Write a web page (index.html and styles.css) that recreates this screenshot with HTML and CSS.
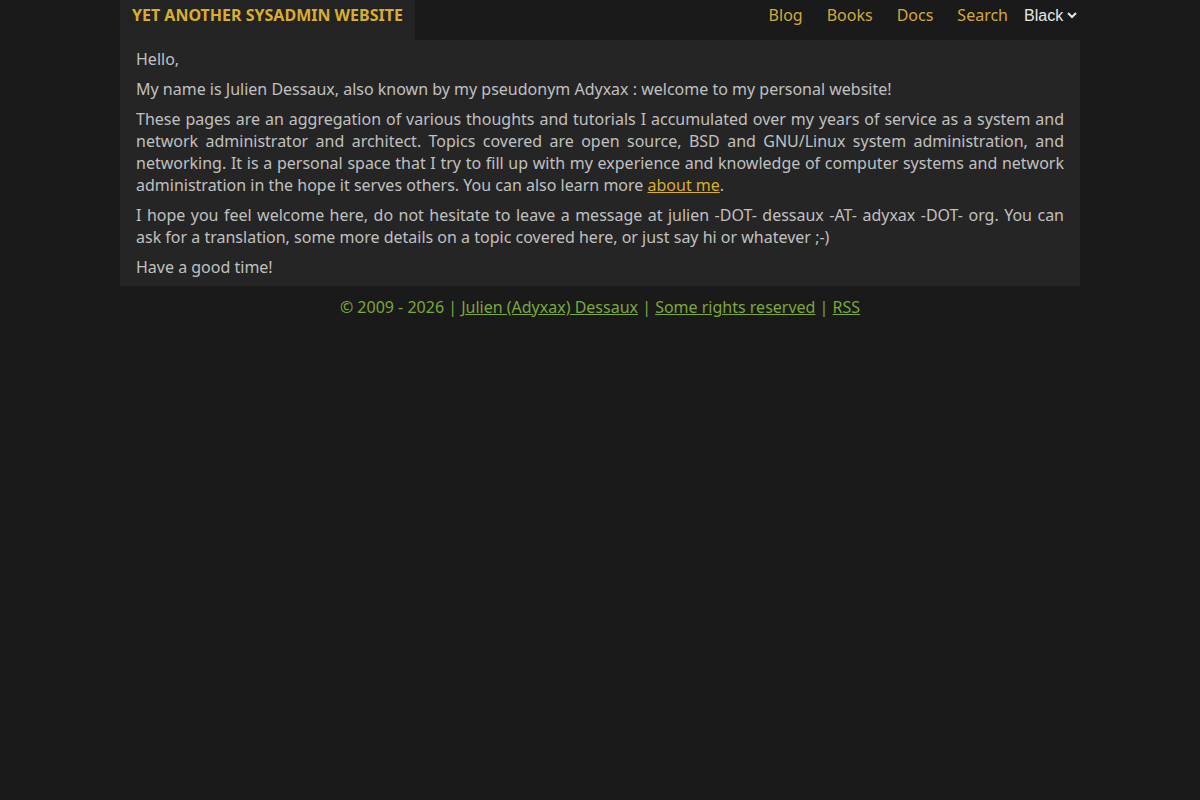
FILE: index.html
```html
<!DOCTYPE html>
<html lang="en">
<head>
<meta charset="utf-8">
<title>Yet Another Sysadmin Website</title>
<link rel="stylesheet" href="styles.css">
</head>
<body>
<div class="wrap">
  <header class="topbar">
    <a class="brand" href="#">YET ANOTHER SYSADMIN WEBSITE</a>
    <nav class="menu">
      <a href="#">Blog</a>
      <a href="#">Books</a>
      <a href="#">Docs</a>
      <a href="#">Search</a>
      <select class="theme">
        <option>Black</option>
      </select>
    </nav>
  </header>
  <main class="content">
    <p>Hello,</p>
    <p>My name is Julien Dessaux, also known by my pseudonym Adyxax : welcome to my personal website!</p>
    <p>These pages are an aggregation of various thoughts and tutorials I accumulated over my years of service as a system and network administrator and architect. Topics covered are open source, BSD and GNU/Linux system administration, and networking. It is a personal space that I try to fill up with my experience and knowledge of computer systems and network administration in the hope it serves others. You can also learn more <a href="#">about me</a>.</p>
    <p>I hope you feel welcome here, do not hesitate to leave a message at julien -DOT- dessaux -AT- adyxax -DOT- org. You can ask for a translation, some more details on a topic covered here, or just say hi or whatever ;-)</p>
    <p>Have a good time!</p>
  </main>
  <footer class="foot">
    © 2009 - 2026 | <a href="#">Julien (Adyxax) Dessaux</a> | <a href="#">Some rights reserved</a> | <a href="#">RSS</a>
  </footer>
</div>
</body>
</html>
```
FILE: styles.css
```css
html, body {
  margin: 0;
  padding: 0;
  background: #1a1a1a;
}
body {
  font-family: "Noto Sans", sans-serif;
  font-size: 16px;
  line-height: 22px;
  color: #c0c0c0;
}
.wrap {
  width: 960px;
  margin: 0 auto;
}
.topbar {
  display: flex;
  justify-content: space-between;
  align-items: stretch;
  height: 40px;
  background: #1a1a1a;
}
.brand {
  display: block;
  padding: 4px 12px 0;
  background: #232323;
  color: #d9ae2c;
  font-weight: bold;
  text-decoration: none;
  width: 271px;
}
.menu {
  display: flex;
  align-items: flex-start;
  gap: 24px;
  padding-top: 4px;
}
.menu a {
  color: #d1a93d;
  text-decoration: none;
}
.theme {
  margin-left: -12px;
  background: transparent;
  border: none;
  color: #e6e6e6;
  font-family: "Liberation Sans", Arial, sans-serif;
  font-size: 16px;
  line-height: 22px;
  height: 22px;
  padding: 0;
}
.theme option {
  background: #1a1a1a;
}
.content {
  background: #252525;
  padding: 8px 16px 0;
  height: 238px;
}
.content p {
  margin: 0 0 8px;
  text-align: justify;
}
.content a {
  color: #d9ae2c;
}
.foot {
  text-align: center;
  color: #7aa83a;
  padding-top: 10px;
}
.foot a {
  color: #7aa83a;
}
```
